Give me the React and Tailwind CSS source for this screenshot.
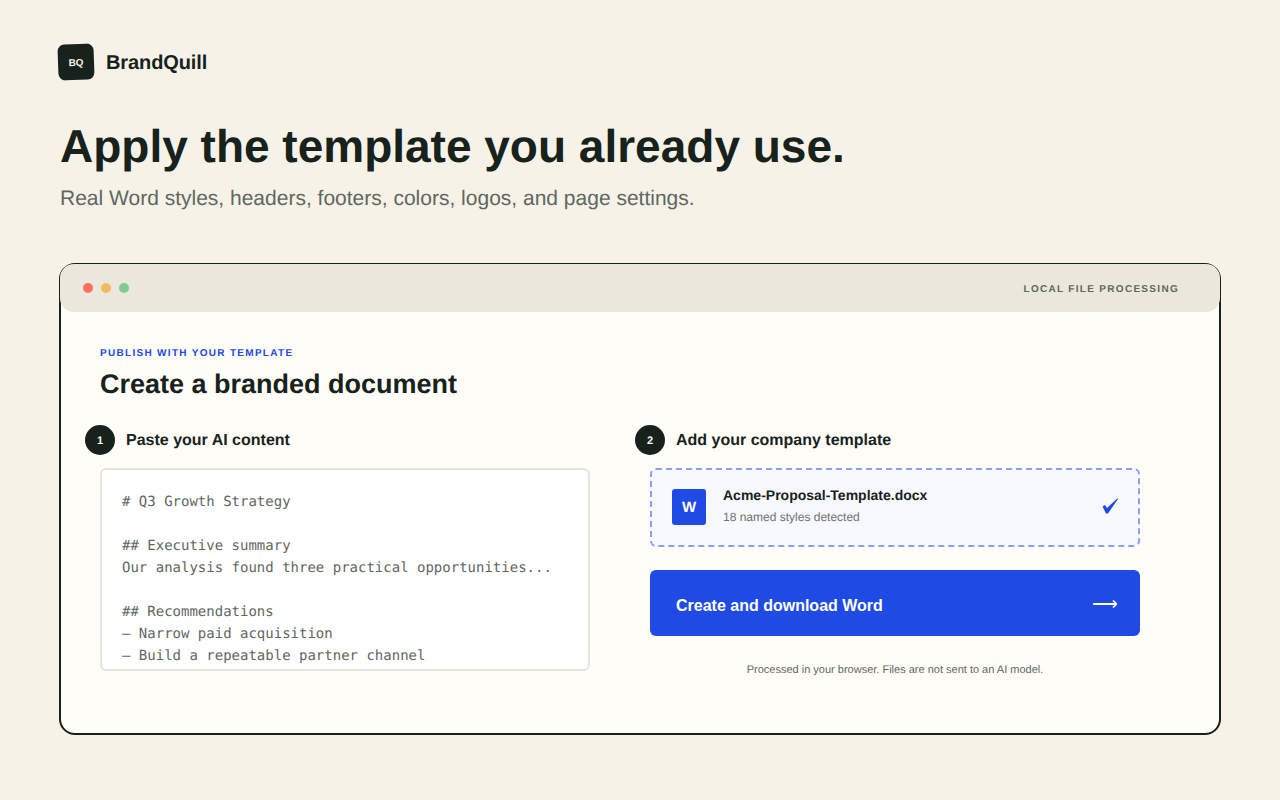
import React from 'react';

const SANS = "font-['Liberation_Sans',Arial,sans-serif]";

const Step = ({ n, label }) => (
  <div className="flex items-center gap-[11px] -ml-[15px] h-[30px]">
    <span className="w-[30px] h-[30px] pt-[2px] rounded-full bg-[#18221c] text-[#fffdf8] text-[11px] font-bold flex items-center justify-center">{n}</span>
    <span className="mt-[2px] text-[16px] font-bold text-[#18221c]">{label}</span>
  </div>
);

const DRAFT = `# Q3 Growth Strategy

## Executive summary
Our analysis found three practical opportunities...

## Recommendations
– Narrow paid acquisition
– Build a repeatable partner channel`;

export default function App() {
  return (
    <div className={`${SANS} [text-rendering:geometricPrecision] min-h-[800px] bg-[#f6f2e8] px-[59px] pt-[44px] text-[#18221c]`}>
      <div className="flex items-center gap-3 h-9 -ml-px">
        <div className="w-9 h-9 pt-[2px] -rotate-2 rounded-[7px] bg-[#18221c] text-[#f6f2e8] text-[10px] font-bold flex items-center justify-center">BQ</div>
        <span className="mt-[2px] text-[20px] tracking-[-0.1px] font-bold">BrandQuill</span>
      </div>

      <h1 className="mt-[38px] ml-px text-[46px] leading-[56px] font-bold">Apply the template you already use.</h1>
      <p className="mt-[9px] ml-px text-[21px] leading-[32px] text-[#5f6860]">Real Word styles, headers, footers, colors, logos, and page settings.</p>

      <div className="mt-[48px] h-[472px] rounded-[16px] border-2 border-[#18221c] bg-[#fffdf8]">
        <div className="-m-px h-12 rounded-[14px] bg-[#ebe7dc] flex items-center justify-between pl-[23px] pr-[41px]">
          <div className="flex gap-2">
            <span className="w-2.5 h-2.5 rounded-full bg-[#ff6f5e]" />
            <span className="w-2.5 h-2.5 rounded-full bg-[#efbc5f]" />
            <span className="w-2.5 h-2.5 rounded-full bg-[#7fcb91]" />
          </div>
          <span className="mt-[2px] text-[10px] font-bold tracking-[1.3px] text-[#5f6860]">LOCAL FILE PROCESSING</span>
        </div>

        <div className="pl-[39px] pt-[37px]">
          <div className="text-[10px] leading-3 font-bold tracking-[1.3px] text-[#204ae4]">PUBLISH WITH YOUR TEMPLATE</div>
          <h2 className="mt-[6px] text-[27px] leading-[36px] font-bold">Create a branded document</h2>

          <div className="mt-[23px] grid grid-cols-[490px_490px] gap-x-[60px]">
            <div>
              <Step n="1" label="Paste your AI content" />
              <pre className="mt-[13px] h-[203px] overflow-hidden rounded-[6px] border-2 border-[#e6e5db] bg-white px-[20px] pt-[21px] font-['DejaVu_Sans_Mono',monospace] text-[14px] leading-[22px] text-[#5f6860]">{DRAFT}</pre>
            </div>

            <div>
              <Step n="2" label="Add your company template" />
              <div className="mt-[13px] h-[79px] rounded-[6px] border-2 border-dashed border-[#8ba0f3] bg-[#f8f9ff] flex items-center pl-[20px] pr-[20px]">
                <div className="mb-[2px] w-[34px] h-9 pt-[4px] rounded-[3px] bg-[#204ae4] text-white text-[15px] font-bold flex items-center justify-center">W</div>
                <div className="ml-[17px] flex-1 mb-[5px]">
                  <div className="text-[14px] leading-[18px] font-bold">Acme-Proposal-Template.docx</div>
                  <div className="mt-[6px] text-[12px] leading-[14px] text-[#6c736d]">18 named styles detected</div>
                </div>
                <svg className="mb-[4px] w-4 h-4" viewBox="0 0 16 16" fill="#204ae4">
                  <path d="M0.5 8.5 L3 7 L5 10 L15.2 0.5 L16 1 L6 15.5 L4 15.5 Z" />
                </svg>
              </div>

              <button className="mt-[23px] w-full h-[66px] rounded-[6px] bg-[#204ae4] text-white flex items-center justify-between pl-[26px] pr-[22px]">
                <span className="text-[16px] font-bold mt-[5px]">Create and download Word</span>
                <span className="mt-[2px] text-[18px] leading-none">⟶</span>
              </button>

              <p className="mt-[27px] text-center text-[11px] leading-[14px] text-[#5f6860]">Processed in your browser. Files are not sent to an AI model.</p>
            </div>
          </div>
        </div>
      </div>
    </div>
  );
}
